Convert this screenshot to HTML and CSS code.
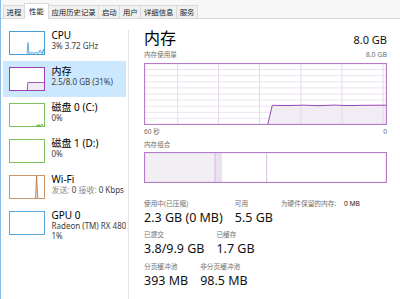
FILE: index.html
```html
<!DOCTYPE html>
<html lang="zh">
<head>
<meta charset="utf-8">
<title>任务管理器 - 性能</title>
<link rel="stylesheet" href="styles.css">
</head>
<body>
<div class="tabs">
  <div class="tab first">进程</div>
  <div class="tab active">性能</div>
  <div class="tab">应用历史记录</div>
  <div class="tab">启动</div>
  <div class="tab">用户</div>
  <div class="tab">详细信息</div>
  <div class="tab">服务</div>
</div>
<div class="main">
  <div class="sidebar">
    <div class="list">
      <div class="item">
        <svg class="thumb" width="36" height="24" viewBox="0 0 36 24">
          <polygon points="0.5,23.5 18,23.5 19,11.5 20,22.5 23,21.5 25,22.5 27,21 29,22.5 31,19 33,22.5 34.5,18 35.5,23.5" fill="#e3f0fa"/>
          <polyline points="0.5,23.5 18,23.5 19,11.5 20,22.5 23,21.5 25,22.5 27,21 29,22.5 31,19 33,22.5 34.5,18 35.5,23" fill="none" stroke="#3f9ad8" stroke-width="0.8"/>
          <rect x="0.5" y="0.5" width="35" height="23" fill="none" stroke="#4a9fd8"/>
        </svg>
        <div class="info"><div class="name">CPU</div><div class="sub">3% 3.72 GHz</div></div>
      </div>
      <div class="item selected">
        <svg class="thumb" width="36" height="24" viewBox="0 0 36 24">
          <rect x="0.5" y="0.5" width="35" height="23" fill="#fff"/>
          <polygon points="18.3,23.5 18.8,15.5 35.5,15.5 35.5,23.5" fill="#f0ecf3"/>
          <polyline points="0.5,23.5 18.3,23.5 18.8,15.5 35.5,15.5" fill="none" stroke="#9c3fba" stroke-width="0.9"/>
          <rect x="0.5" y="0.5" width="35" height="23" fill="none" stroke="#9c3fba"/>
        </svg>
        <div class="info"><div class="name">内存</div><div class="sub">2.5/8.0 GB (31%)</div></div>
      </div>
      <div class="item">
        <svg class="thumb" width="36" height="24" viewBox="0 0 36 24">
          <rect x="0.5" y="0.5" width="35" height="23" fill="#fff"/>
          <polyline points="27,23.5 28,22 29,23.5 30,21.5 31,23.5 32,22 33,21 34,23.5" fill="none" stroke="#4ca60c" stroke-width="0.8"/>
          <rect x="0.5" y="0.5" width="35" height="23" fill="none" stroke="#7dc05a"/>
        </svg>
        <div class="info"><div class="name">磁盘 0 (C:)</div><div class="sub">0%</div></div>
      </div>
      <div class="item">
        <svg class="thumb" width="36" height="24" viewBox="0 0 36 24">
          <rect x="0.5" y="0.5" width="35" height="23" fill="#fff" stroke="#7dc05a"/>
        </svg>
        <div class="info"><div class="name">磁盘 1 (D:)</div><div class="sub">0%</div></div>
      </div>
      <div class="item">
        <svg class="thumb" width="36" height="24" viewBox="0 0 36 24">
          <rect x="0.5" y="0.5" width="35" height="23" fill="#fff"/>
          <polygon points="26.5,23.5 27.6,0.8 28.8,23.5" fill="#efdcc8" stroke="#a8672a" stroke-width="0.7"/>
          <rect x="0.5" y="0.5" width="35" height="23" fill="none" stroke="#c9946a"/>
        </svg>
        <div class="info"><div class="name">Wi-Fi</div><div class="sub"><span class="lt">发送:</span> 0 <span class="lt">接收:</span> 0 Kbps</div></div>
      </div>
      <div class="item gpu">
        <svg class="thumb" width="36" height="24" viewBox="0 0 36 24">
          <rect x="0.5" y="0.5" width="35" height="23" fill="#fff" stroke="#5aa7dd"/>
          <line x1="24" y1="23" x2="26" y2="23" stroke="#9cc9ea" stroke-width="0.6"/>
        </svg>
        <div class="info"><div class="name">GPU 0</div><div class="sub clip">Radeon (TM) RX 480 Graphics</div><div class="sub">1%</div></div>
      </div>
    </div>
    <div class="sep"></div>
  </div>
  <div class="panel">
    <div class="head">
      <div class="title">内存</div>
      <div class="total">8.0 GB</div>
    </div>
    <div class="caps">
      <span>内存使用量</span>
      <span class="capnum">8.0 GB</span>
    </div>
    <svg class="graph" width="243" height="62" viewBox="0 0 243 62">
      <g stroke="#ece3ef" stroke-width="1">
        <line x1="1" y1="6.6" x2="242" y2="6.6"/>
        <line x1="1" y1="12.7" x2="242" y2="12.7"/>
        <line x1="1" y1="18.8" x2="242" y2="18.8"/>
        <line x1="1" y1="24.9" x2="242" y2="24.9"/>
        <line x1="1" y1="31" x2="242" y2="31"/>
        <line x1="1" y1="37.1" x2="242" y2="37.1"/>
        <line x1="1" y1="43.2" x2="242" y2="43.2"/>
        <line x1="1" y1="49.3" x2="242" y2="49.3"/>
        <line x1="1" y1="55.4" x2="242" y2="55.4"/>
      </g>
      <polygon points="123.7,61.5 128.3,42.3 140,42.6 160,42.2 175,42.7 190,42.1 205,42.6 220,42.3 242.5,42.2 242.5,61.5" fill="#f1edf4"/>
      <g stroke="#e6dbea" stroke-width="1">
        <line x1="33.7" y1="1" x2="33.7" y2="61"/>
        <line x1="74.5" y1="1" x2="74.5" y2="61"/>
        <line x1="115.5" y1="1" x2="115.5" y2="61"/>
        <line x1="157" y1="1" x2="157" y2="61"/>
        <line x1="198" y1="1" x2="198" y2="61"/>
        <line x1="239" y1="1" x2="239" y2="61"/>
      </g>
      <polyline points="0.5,61.5 123.7,61.5 128.3,42.3 140,42.6 160,42.2 175,42.7 190,42.1 205,42.6 220,42.3 242.5,42.2" fill="none" stroke="#9a46b8" stroke-width="1"/>
      <rect x="0.5" y="0.5" width="242" height="61" fill="none" stroke="#b57ac9" stroke-width="1.2"/>
    </svg>
    <div class="axis">
      <span>60 秒</span>
      <span>0</span>
    </div>
    <div class="caps2">内存组合</div>
    <svg class="compo" width="243" height="31" viewBox="0 0 243 31">
      <rect x="1" y="1" width="70" height="29" fill="#f1eff3"/>
      <rect x="71" y="1" width="7" height="29" fill="#ebe0ef"/>
      <line x1="71" y1="1" x2="71" y2="30" stroke="#cdaed9" stroke-width="0.8"/>
      <line x1="122.7" y1="1" x2="122.7" y2="30" stroke="#cdaed9" stroke-width="0.8"/>
      <rect x="0.5" y="0.5" width="242" height="30" fill="none" stroke="#b57ac9" stroke-width="1.2"/>
    </svg>
    <div class="stats">
      <div class="srow">
        <div class="stat"><div class="lbl">使用中(已压缩)</div><div class="val">2.3 GB (0 MB)</div></div>
        <div class="stat"><div class="lbl">可用</div><div class="val">5.5 GB</div></div>
        <div class="stat hw"><div class="lbl">为硬件保留的内存: <span class="dk">0 MB</span></div></div>
      </div>
      <div class="srow">
        <div class="stat"><div class="lbl">已提交</div><div class="val">3.8/9.9 GB</div></div>
        <div class="stat"><div class="lbl">已缓存</div><div class="val">1.7 GB</div></div>
      </div>
      <div class="srow">
        <div class="stat"><div class="lbl">分页缓冲池</div><div class="val">393 MB</div></div>
        <div class="stat"><div class="lbl">非分页缓冲池</div><div class="val">98.5 MB</div></div>
      </div>
    </div>
  </div>
</div>
</body>
</html>
```

FILE: styles.css
```css
* { box-sizing: border-box; }
html, body { margin: 0; padding: 0; }
body {
  width: 400px;
  height: 299px;
  overflow: hidden;
  background: #fff;
  color: #000;
  border-left: 1px solid #8dbde6;
  font-family: "Noto Sans", "Noto Sans CJK SC", sans-serif;
}
svg { display: block; }

.tabs {
  display: flex;
  align-items: flex-end;
  height: 19px;
  padding-left: 2px;
  background: #f7f7f7;
  border-bottom: 1px solid #d9d9d9;
}
.tab {
  height: 13px;
  line-height: 12px;
  padding: 0 2.6px;
  font-size: 7.4px;
  color: #222;
  background: #f0f0f0;
  border-top: 1px solid #dadada;
  border-right: 1px solid #dadada;
  white-space: nowrap;
}
.tab.first { border-left: 1px solid #dadada; }
.tab.active {
  height: 16px;
  line-height: 15px;
  margin-bottom: -1px;
  padding: 0 4px;
  background: #fff;
  border-left: 1px solid #dadada;
  margin-left: -1px;
}

.main {
  display: flex;
  height: 280px;
}
.sidebar {
  display: flex;
  width: 128px;
  flex: none;
}
.list {
  width: 127px;
  padding-top: 6px;
}
.sep {
  width: 1px;
  margin-top: 11px;
  background: #e2e2e2;
}
.item {
  display: flex;
  width: 123px;
  height: 36px;
  margin-left: 2px;
  padding-left: 6px;
}
.item.selected { background: #cce8ff; }
.item.gpu { height: 40px; }
.thumb {
  flex: none;
  margin-top: 6px;
}
.info {
  flex: 1;
  min-width: 0;
  margin-left: 6.5px;
  margin-top: 4.5px;
  white-space: nowrap;
}
.name {
  font-size: 10px;
  line-height: 11px;
  color: #000;
}
.sub {
  font-size: 8px;
  line-height: 10.4px;
  color: #3c3c3c;
}
.sub.clip { clip-path: inset(-4px 0 -4px 0); }
.sub .lt { color: #8a8a8a; }

.panel {
  flex: 1;
  padding: 9.3px 13px 0 15px;
}
.head {
  display: flex;
  justify-content: space-between;
  align-items: baseline;
  height: 20px;
}
.title {
  font-size: 16px;
  line-height: 20px;
}
.total {
  font-size: 11px;
  line-height: 14px;
  color: #111;
}
.caps {
  display: flex;
  justify-content: space-between;
  align-items: baseline;
  margin-top: 2px;
  height: 10px;
  font-size: 6.6px;
  line-height: 10px;
  color: #707070;
}
.caps .capnum { font-size: 7px; }
.graph { margin-top: 2.7px; }
.axis {
  display: flex;
  justify-content: space-between;
  margin-top: 2px;
  font-size: 6.6px;
  line-height: 9px;
  color: #707070;
}
.caps2 {
  margin-top: 4.5px;
  font-size: 6.6px;
  line-height: 9px;
  color: #707070;
}
.compo { margin-top: 2.8px; }

.stats { margin-top: 15.5px; }
.srow {
  display: flex;
  gap: 12px;
  height: 28px;
  margin-bottom: 3.5px;
}
.stat { white-space: nowrap; }
.stat.hw { margin-left: -4px; }
.lbl {
  font-size: 6.7px;
  line-height: 10px;
  color: #707070;
}
.lbl .dk {
  color: #222;
  margin-left: 6px;
}
.val {
  font-size: 12.5px;
  line-height: 18px;
  color: #111;
}
```
